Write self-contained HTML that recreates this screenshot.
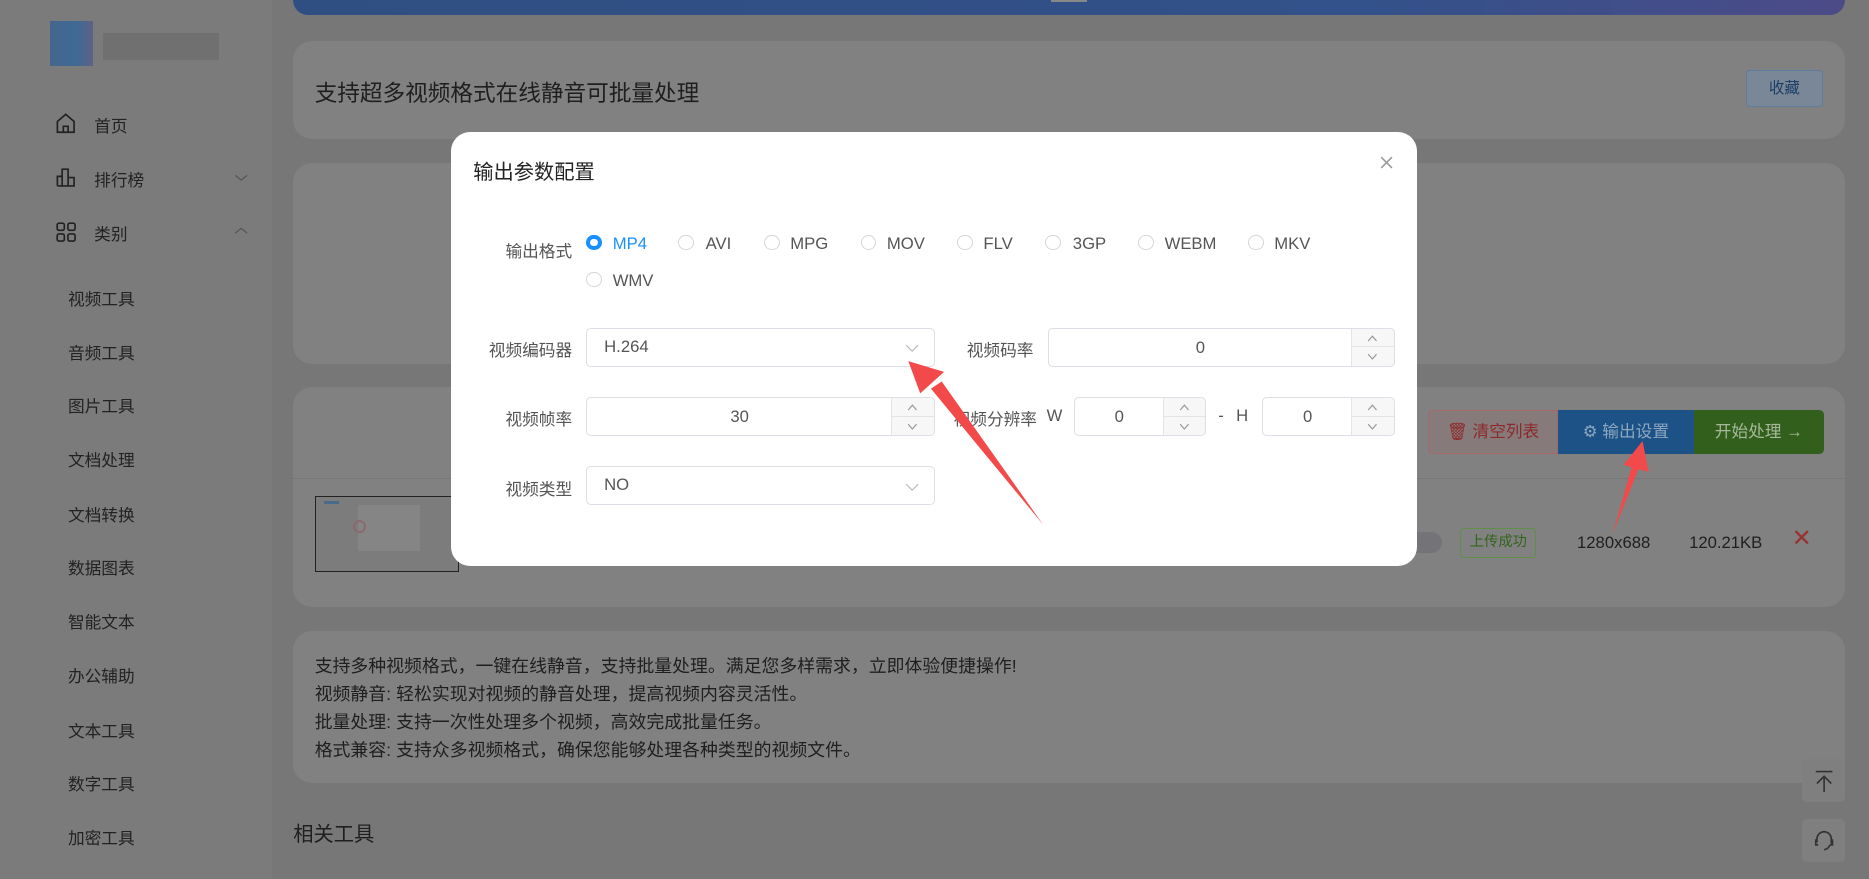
<!DOCTYPE html>
<html><head><meta charset="utf-8">
<style>
html{zoom:1.192}
body{margin:0;width:1568px;height:737px;overflow:hidden;background:#777;font-family:"Liberation Sans","Noto Sans CJK SC",sans-serif;position:relative;color:#2a2a2a}
.a{position:absolute}
.side{left:0;top:0;width:228px;height:737px;background:#7b7b7b}
.card{background:#818181;border-radius:16px}
.mi{font-size:14px;color:#222}
.sub{left:57px;font-size:14px;color:#222}
.modal{left:378px;top:111px;width:811px;height:364px;background:#fff;border-radius:16px}
.lab{font-size:14px;color:#555;text-align:right;width:100px}
.rad{width:13px;height:13px;border:1px solid #d6d6d6;border-radius:50%;box-sizing:border-box}
.rt{font-size:14px;color:#555}
.inp{border:1px solid #dcdfe6;border-radius:4px;box-sizing:border-box;background:#fff;font-size:14px;color:#555}
.ctl{position:absolute;right:0;top:0;bottom:0;width:35px;border-left:1px solid #e4e4e4;background:#f7f7f7;border-radius:0 4px 4px 0}
.ctl div{height:50%;box-sizing:border-box;position:relative}
.ctl div:first-child{border-bottom:1px solid #e4e4e4}
.ctl svg{position:absolute;left:13px;top:5px}
.sel{position:absolute;right:12px;top:13px}
</style></head><body>
<div class="a side"></div>
<div class="a" style="left:42px;top:18px;width:36px;height:37px;background:linear-gradient(90deg,#45668d,#3d6a95 60%,#5f6185);"></div>
<div class="a" style="left:86px;top:28px;width:98px;height:22px;background:#6e6e6e;opacity:.8"></div>
<svg class="a" style="left:46px;top:94px" width="18" height="80" viewBox="0 0 18 80" fill="none" stroke="#222" stroke-width="1.4"><path d="M2 8 L9 2 L16 8 V17 H2 Z M7 17 V12 H11 V17"/><path d="M2 62 V54 H6 V62 M6 62 V48 H11 V62 M11 62 V55 H16 V62 H2"/></svg>
<svg class="a" style="left:47px;top:186px" width="18" height="18" fill="none" stroke="#222" stroke-width="1.4"><rect x="1" y="1" width="6" height="6" rx="1.5"/><rect x="10" y="1" width="6" height="6" rx="1.5"/><rect x="1" y="10" width="6" height="6" rx="1.5"/><rect x="10" y="10" width="6" height="6" rx="1.5"/></svg>
<div class="a mi" style="left:79px;top:95px">首页</div>
<div class="a mi" style="left:79px;top:140px">排行榜</div>
<div class="a mi" style="left:79px;top:185px">类别</div>
<svg class="a" style="left:196px;top:145px" width="12" height="8" fill="none" stroke="#555" stroke-width="1"><path d="M1 2 L6 6 L11 2"/></svg>
<svg class="a" style="left:196px;top:190px" width="12" height="8" fill="none" stroke="#555" stroke-width="1"><path d="M1 6 L6 2 L11 6"/></svg>
<div class="a sub" style="top:240px">视频工具</div>
<div class="a sub" style="top:285px">音频工具</div>
<div class="a sub" style="top:330px">图片工具</div>
<div class="a sub" style="top:375px">文档处理</div>
<div class="a sub" style="top:421px">文档转换</div>
<div class="a sub" style="top:466px">数据图表</div>
<div class="a sub" style="top:511px">智能文本</div>
<div class="a sub" style="top:556px">办公辅助</div>
<div class="a sub" style="top:602px">文本工具</div>
<div class="a sub" style="top:647px">数字工具</div>
<div class="a sub" style="top:692px">加密工具</div>

<div class="a" style="left:246px;top:0;width:1302px;height:13px;background:linear-gradient(90deg,#2f4f82,#33518a 70%,#4c4b88);border-radius:0 0 14px 14px"></div>
<div class="a" style="left:882px;top:0;width:30px;height:2px;background:#888"></div>
<div class="a card" style="left:246px;top:34px;width:1302px;height:83px"></div>
<div class="a" style="left:264px;top:63px;font-size:19px;color:#1f1f1f">支持超多视频格式在线静音可批量处理</div>
<div class="a" style="left:1465px;top:59px;width:64px;height:31px;border:1px solid #5e7c9c;border-radius:3px;background:#7a8796;color:#1b3f66;font-size:13px;text-align:center;line-height:31px;box-sizing:border-box">收藏</div>
<div class="a card" style="left:246px;top:137px;width:1302px;height:168px"></div>
<div class="a card" style="left:246px;top:325px;width:1302px;height:184px"></div>
<div class="a" style="left:1198px;top:344px;width:109px;height:37px;background:#867a7b;border:1px solid #a56868;border-radius:4px 0 0 4px;box-sizing:border-box;color:#8f2a2a;font-size:14px;line-height:35px;text-align:center">&#128465;&#xFE0E; 清空列表</div>
<div class="a" style="left:1307px;top:344px;width:114px;height:37px;background:#1c5285;color:#8ea7c0;font-size:14px;line-height:37px;text-align:center">⚙ 输出设置</div>
<div class="a" style="left:1421px;top:344px;width:109px;height:37px;background:#335f1d;border-radius:0 4px 4px 0;color:#a5b99a;font-size:14px;line-height:37px;text-align:center">开始处理 →</div>
<div class="a" style="left:246px;top:401px;width:1302px;height:1px;background:#777"></div>
<div class="a" style="left:264px;top:416px;width:121px;height:64px;border:1px solid #222;background:#7c7c7c;box-sizing:border-box"></div>
<div class="a" style="left:300px;top:424px;width:52px;height:38px;background:#858585"></div>
<div class="a" style="left:296px;top:436px;width:8px;height:8px;border-radius:50%;border:2px solid #8a6a70"></div>
<div class="a" style="left:272px;top:420px;width:12px;height:3px;background:#4a6a8a"></div>
<div class="a" style="left:1180px;top:446px;width:30px;height:18px;border-radius:9px;background:#747478"></div>
<div class="a" style="left:1225px;top:443px;width:64px;height:25px;border:1px solid #5f9048;border-radius:3px;box-sizing:border-box;color:#32651d;font-size:12px;line-height:23px;text-align:center">上传成功</div>
<div class="a" style="left:1323px;top:447px;font-size:14px;color:#1f1f1f">1280x688</div>
<div class="a" style="left:1417px;top:447px;font-size:14px;color:#1f1f1f">120.21KB</div>
<div class="a" style="left:1503px;top:440px;font-size:20px;color:#9a3131">✕</div>
<div class="a card" style="left:246px;top:529px;width:1302px;height:128px"></div>
<div class="a" style="left:264px;top:547px;font-size:15px;line-height:23.5px;color:#1f1f1f">支持多种视频格式，一键在线静音，支持批量处理。满足您多样需求，立即体验便捷操作!<br>视频静音: 轻松实现对视频的静音处理，提高视频内容灵活性。<br>批量处理: 支持一次性处理多个视频，高效完成批量任务。<br>格式兼容: 支持众多视频格式，确保您能够处理各种类型的视频文件。</div>
<div class="a" style="left:246px;top:685px;font-size:17px;color:#1f1f1f">相关工具</div>
<div class="a" style="left:1512px;top:637px;width:36px;height:36px;background:#7f7f7f;border-radius:4px"></div>
<svg class="a" style="left:1519px;top:644px" width="22" height="22" fill="none" stroke="#333" stroke-width="1.4"><path d="M4 3 H18 M11 20 V7 M5 13 L11 7 L17 13"/></svg>
<div class="a" style="left:1512px;top:687px;width:36px;height:36px;background:#7f7f7f;border-radius:4px"></div>
<svg class="a" style="left:1519px;top:694px" width="22" height="22" fill="none" stroke="#333" stroke-width="1.4"><path d="M5 13 V10 A6 6 0 0 1 17 10 V14 M5 11 H4 V15 H6 M17 11 H18 V15 H16 M16 15 Q14 19 11 19"/></svg>

<div class="a modal"></div>
<div class="a" style="left:397px;top:130px;font-size:17px;color:#222">输出参数配置</div>
<svg class="a" style="left:1158px;top:131px" width="11" height="11" stroke="#999" stroke-width="1.3"><path d="M1 1 L10 10 M10 1 L1 10"/></svg>
<div class="a lab" style="left:380px;top:200px">输出格式</div>
<div class="a rad" style="left:492px;top:197px;border:4px solid #1890ff"></div>
<div class="a rt" style="left:514px;top:196px;color:#1890ff">MP4</div>
<div class="a rad" style="left:569px;top:197px"></div><div class="a rt" style="left:592px;top:196px">AVI</div>
<div class="a rad" style="left:641px;top:197px"></div><div class="a rt" style="left:663px;top:196px">MPG</div>
<div class="a rad" style="left:722px;top:197px"></div><div class="a rt" style="left:744px;top:196px">MOV</div>
<div class="a rad" style="left:803px;top:197px"></div><div class="a rt" style="left:825px;top:196px">FLV</div>
<div class="a rad" style="left:877px;top:197px"></div><div class="a rt" style="left:900px;top:196px">3GP</div>
<div class="a rad" style="left:955px;top:197px"></div><div class="a rt" style="left:977px;top:196px">WEBM</div>
<div class="a rad" style="left:1047px;top:197px"></div><div class="a rt" style="left:1069px;top:196px">MKV</div>
<div class="a rad" style="left:492px;top:228px"></div><div class="a rt" style="left:514px;top:227px">WMV</div>

<div class="a lab" style="left:380px;top:283px">视频编码器</div>
<div class="a inp" style="left:492px;top:275px;width:292px;height:33px;padding:7px 14px">H.264<svg class="sel" width="12" height="8" fill="none" stroke="#bbb"><path d="M1 1 L6 6 L11 1"/></svg></div>
<div class="a lab" style="left:767px;top:283px">视频码率</div>
<div class="a inp" style="left:879px;top:275px;width:291px;height:33px"><div style="position:absolute;left:0;right:35px;top:8px;text-align:center">0</div><div class="ctl"><div><svg width="9" height="6" fill="none" stroke="#999"><path d="M1 5 L4.5 1 L8 5"/></svg></div><div><svg width="9" height="6" fill="none" stroke="#999"><path d="M1 1 L4.5 5 L8 1"/></svg></div></div></div>

<div class="a lab" style="left:380px;top:341px">视频帧率</div>
<div class="a inp" style="left:492px;top:333px;width:292px;height:33px"><div style="position:absolute;left:0;right:35px;top:8px;text-align:center">30</div><div class="ctl"><div><svg width="9" height="6" fill="none" stroke="#999"><path d="M1 5 L4.5 1 L8 5"/></svg></div><div><svg width="9" height="6" fill="none" stroke="#999"><path d="M1 1 L4.5 5 L8 1"/></svg></div></div></div>
<div class="a rt" style="left:800px;top:341px">视频分辨率</div>
<div class="a rt" style="left:878px;top:341px">W</div>
<div class="a inp" style="left:901px;top:333px;width:111px;height:33px"><div style="position:absolute;left:0;right:35px;top:8px;text-align:center">0</div><div class="ctl"><div><svg width="9" height="6" fill="none" stroke="#999"><path d="M1 5 L4.5 1 L8 5"/></svg></div><div><svg width="9" height="6" fill="none" stroke="#999"><path d="M1 1 L4.5 5 L8 1"/></svg></div></div></div>
<div class="a rt" style="left:1022px;top:341px">-</div>
<div class="a rt" style="left:1037px;top:341px">H</div>
<div class="a inp" style="left:1059px;top:333px;width:111px;height:33px"><div style="position:absolute;left:0;right:35px;top:8px;text-align:center">0</div><div class="ctl"><div><svg width="9" height="6" fill="none" stroke="#999"><path d="M1 5 L4.5 1 L8 5"/></svg></div><div><svg width="9" height="6" fill="none" stroke="#999"><path d="M1 1 L4.5 5 L8 1"/></svg></div></div></div>

<div class="a lab" style="left:380px;top:399px">视频类型</div>
<div class="a inp" style="left:492px;top:391px;width:292px;height:33px;padding:7px 14px">NO<svg class="sel" width="12" height="8" fill="none" stroke="#bbb"><path d="M1 1 L6 6 L11 1"/></svg></div>

<svg class="a" style="left:0;top:0" width="1568" height="737">
<polygon points="875,440 790,320 781,326" fill="#f24a4a"/>
<polygon points="762,303 792,312 772,330" fill="#f24a4a"/>
<polygon points="1353,448 1372,380 1379,382" fill="#f24a4a"/>
<polygon points="1378,370 1383,396 1362,390" fill="#f24a4a"/>
</svg>
</body></html>
